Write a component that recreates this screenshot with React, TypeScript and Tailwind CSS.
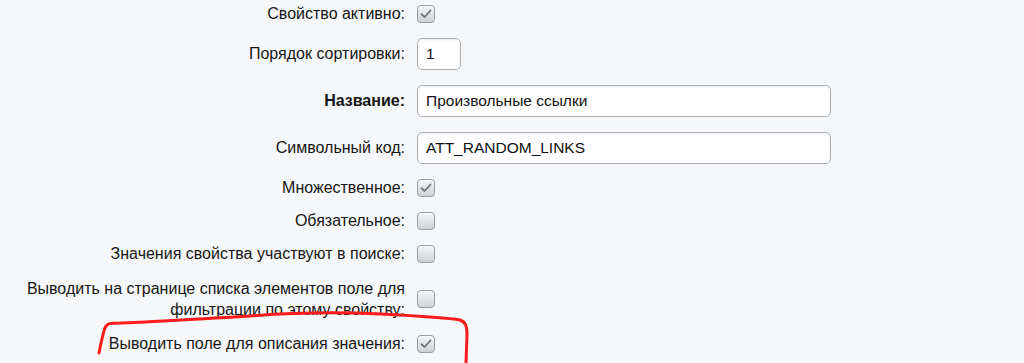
import type { ReactNode } from "react";

function Checkbox({ checked }: { checked?: boolean }) {
  return (
    <div className="w-[18px] h-[18px] rounded-[4px] border border-[#9a9ea3] bg-gradient-to-b from-[#f4f5f6] to-[#cfd2d5] shadow-[inset_0_1px_0_rgba(255,255,255,0.8)] flex items-center justify-center">
      {checked && (
        <svg width="12" height="10" viewBox="0 0 12 10" fill="none">
          <path d="M1.5 5.2 L4.6 8 L10.5 1.5" stroke="#6f7275" strokeWidth="1.8" strokeLinecap="round" strokeLinejoin="round" />
        </svg>
      )}
    </div>
  );
}

function TextInput({ value, width }: { value: string; width: string }) {
  return (
    <div className={`${width} h-[32px] rounded-[5px] border border-[#a9afb5] bg-white shadow-[inset_0_1px_2px_rgba(0,0,0,0.08)] flex items-center px-[8px] text-[15.5px] text-[#111]`}>
      {value}
    </div>
  );
}

function Row({ label, children, bold }: { label: ReactNode; children: ReactNode; bold?: boolean }) {
  return (
    <div className="flex items-center gap-[12px]">
      <div className={`w-[405px] text-right text-[16px] leading-[18px] text-[#161616] ${bold ? "font-bold" : ""}`}>
        {label}
      </div>
      {children}
    </div>
  );
}

export default function App() {
  return (
    <div
      className="relative w-[1024px] h-[363px] overflow-hidden bg-[#f5f7f8]"
      style={{ fontFamily: '"Liberation Sans", Arial, sans-serif' }}
    >
      <div className="flex flex-col gap-[15px] pt-[5px]">
        <Row label="Свойство активно:">
          <Checkbox checked />
        </Row>
        <Row label="Порядок сортировки:">
          <TextInput value="1" width="w-[44px]" />
        </Row>
        <Row label="Название:" bold>
          <TextInput value="Произвольные ссылки" width="w-[414px]" />
        </Row>
        <Row label="Символьный код:">
          <TextInput value="ATT_RANDOM_LINKS" width="w-[414px]" />
        </Row>
        <Row label="Множественное:">
          <Checkbox checked />
        </Row>
        <Row label="Обязательное:">
          <Checkbox />
        </Row>
        <Row label="Значения свойства участвуют в поиске:">
          <Checkbox />
        </Row>
        <div className="flex items-center gap-[12px]">
          <div className="w-[405px] text-right text-[16px] leading-[21px] text-[#161616]">
            <div className="whitespace-nowrap">Выводить на странице списка элементов поле для</div>
            <div className="whitespace-nowrap">фильтрации по этому свойству:</div>
          </div>
          <Checkbox />
        </div>
        <Row label="Выводить поле для описания значения:">
          <Checkbox checked />
        </Row>
      </div>

      {/* red marker annotation */}
      <svg className="absolute inset-0 pointer-events-none" width="1024" height="363" viewBox="0 0 1024 363" fill="none">
        <path
          d="M99 353 C101 343 103 333 105 328 C107 323 110 323 120 323 C150 322 200 319 250 316 C290 313 340 312 380 314 C420 316 450 318 460 320 C466 322 467 327 467 335 L466 363"
          stroke="#ff1a1a"
          strokeWidth="3"
          strokeLinecap="round"
          strokeLinejoin="round"
        />
      </svg>
    </div>
  );
}
